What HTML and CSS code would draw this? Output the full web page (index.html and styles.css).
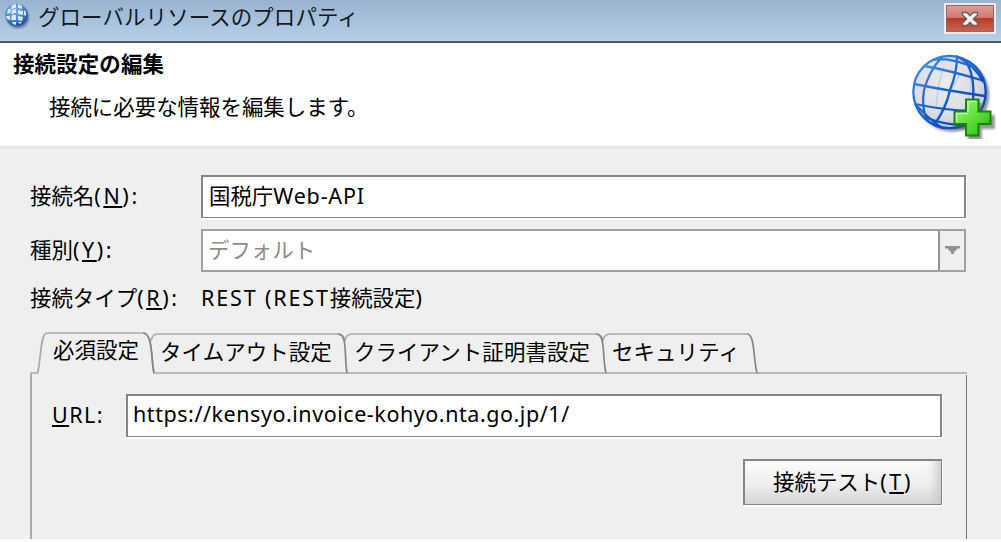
FILE: index.html
```html
<!DOCTYPE html>
<html lang="ja">
<head>
<meta charset="utf-8">
<title>グローバルリソースのプロパティ</title>
<link rel="stylesheet" href="styles.css">
</head>
<body>
<div class="dialog">
  <header class="titlebar">
    <svg class="app-icon" viewBox="0 0 26 27">
      <defs>
        <radialGradient id="ball" cx=".38" cy=".3" r=".75"><stop offset="0" stop-color="#7fb2e6"/><stop offset=".6" stop-color="#4184cf"/><stop offset="1" stop-color="#1c4890"/></radialGradient>
        <filter id="soft" x="-20%" y="-20%" width="150%" height="150%"><feGaussianBlur stdDeviation="1"/></filter>
      </defs>
      <circle cx="14" cy="15.500" r="11" fill="#39506f" opacity=".6" filter="url(#soft)"/>
      <circle cx="12.500" cy="13" r="11.300" fill="url(#ball)"/>
      <g fill="#dbe8f4">
        <path d="M8 3l4-1v4l-5 1zM14 2l4 2 0 3-4-1zM4 7l3 0-1 4-3 1zM8 8l4-1v4l-5 1zM14 8l5 1 0 4-5-1zM20 8l2 2 0 4-2-1zM2 14l4 0 0 4-3-1zM8 13l4 0v5l-5 0zM14 14l5 1-1 4-4-1zM8 20l4 0v3l-3-1zM14 20l4 0-2 2z"/>
      </g>
    </svg>
    <h1 class="title">グローバルリソースのプロパティ</h1>
    <button class="close" aria-label="閉じる">
      <svg class="close-x" viewBox="0 0 18 16"><path d="M1.500 1.500h4.500l3 3.200 3-3.200h4.500v2.500L12.300 8l4.200 4v2.500H12l-3-3.200-3 3.200H1.500V12l4.200-4-4.200-4z" fill="#f7f7f7" stroke="#685b65" stroke-width="1.300"/></svg>
    </button>
  </header>

  <section class="banner">
    <div class="banner-text">
      <h2 class="banner-title">接続設定の編集</h2>
      <p class="banner-desc">接続に必要な情報を編集します。</p>
    </div>
    <svg class="globe" viewBox="0 0 86 86">
      <defs>
        <radialGradient id="sphere" cx=".45" cy=".4" r=".6"><stop offset="0" stop-color="#ececee"/><stop offset=".7" stop-color="#dcdde1"/><stop offset="1" stop-color="#b9c9e4"/></radialGradient>
        <linearGradient id="wire" x1="0" y1="0" x2="1" y2="1"><stop offset="0" stop-color="#4695e8"/><stop offset=".55" stop-color="#1457c8"/><stop offset="1" stop-color="#0838a8"/></linearGradient>
        <linearGradient id="plus" x1="0" y1="0" x2="1" y2="1"><stop offset="0" stop-color="#a2f77b"/><stop offset=".5" stop-color="#5fe03c"/><stop offset="1" stop-color="#27b40b"/></linearGradient>
      </defs>
      <circle cx="42.500" cy="42" r="37" fill="#5d6570" opacity=".65" filter="url(#soft)"/>
      <circle cx="39.500" cy="39" r="36.800" fill="url(#sphere)"/>
      <g fill="none" stroke="#b5d0f2" stroke-width="1.400">
        <path d="M34 14Q27 32 26 56M50 20Q39 43 24 70M60 21Q63 43 52 60"/>
      </g>
      <g fill="none" stroke="url(#wire)" stroke-width="2.300">
        <circle cx="39.500" cy="39" r="36.200"/>
        <path d="M14 13Q38 17 71 27M4 31Q34 37 75 43M5 51Q33 57 62 58M17 65Q34 72 55 72"/>
        <path d="M32 4Q19 18 14 37Q11 54 17 67M47 3Q47 20 40 37Q36 56 24 72M56 9Q65 22 63 48M22 7Q36 4 58 12M6 52Q19 66 32 75M46 3Q66 13 73 29"/>
      </g>
      <path d="M58 50h14v12h13v14H72v11H58V76H46V62h12z" fill="#555" opacity=".6" filter="url(#soft)"/>
      <path d="M56 46.500h12.500v12H80.500V71H68.500v11.500H56V71H44.500V58.500H56z" fill="url(#plus)" stroke="#16850b" stroke-width="2"/>
      <path d="M58 59V48.500h8.500M46.500 69V60.500H58" fill="none" stroke="#bcff9e" stroke-width="1.300"/>
    </svg>
  </section>

  <main class="form">
    <div class="row">
      <label class="label">接続名<span class="latin key">(<u>N</u>):</span></label>
      <div class="field name">国税庁<span class="latin">Web-API</span></div>
    </div>
    <div class="row">
      <label class="label">種別<span class="latin key">(<u>Y</u>):</span></label>
      <div class="field select">
        <span class="select-value">デフォルト</span>
        <span class="select-arrow"><svg class="arrow" viewBox="0 0 15 8"><path d="M0 0h15v2.500h-2.500l-2.500 3H9V8H6V5.500H5L2.500 2.500H0z" fill="#96928b"/></svg></span>
      </div>
    </div>
    <div class="row type-row">
      <span class="label">接続タイプ<span class="latin key">(<u>R</u>):</span></span>
      <span class="type-value"><span class="latin">REST (REST</span>接続設定<span class="latin">)</span></span>
    </div>

    <nav class="tabs">
      <svg class="tab-lines" viewBox="0 0 937 46">
        <path d="M1 43V41H7.500C11 30 10 1 17 1H113C123 1 121 28 124 41H937" fill="none" stroke="#aaa" stroke-width="1.700"/>
        <g fill="none" stroke="#aaa" stroke-width="1.700">
          <path d="M121 9Q122 2 128 2H308Q314 2 315 9"/>
          <path d="M315 9Q316 2 322 2H566Q572 2 573 9"/>
          <path d="M573 9Q574 2 580 2H717"/>
        </g>
        <path d="M113 1C123 1 121 28 124 41M308 2C318 2 314 26 317 41M566 2C576 2 572 26 576 41M717 2C725 2 723 26 727 41" fill="none" stroke="#858585" stroke-width="1.700"/>
      </svg>
      <span class="tab tab-active">必須設定</span>
      <span class="tab tab-timeout">タイムアウト設定</span>
      <span class="tab tab-cert">クライアント証明書設定</span>
      <span class="tab">セキュリティ</span>
    </nav>
    <section class="panel">
      <div class="url-row">
        <label class="url-label latin"><u>U</u>RL:</label>
        <div class="field url latin">https://kensyo.invoice-kohyo.nta.go.jp/1/</div>
      </div>
      <button class="test">接続テスト<span class="latin key">(<u>T</u>)</span></button>
    </section>
  </main>
</div>
</body>
</html>
```
FILE: styles.css
```css
* { box-sizing: border-box; }
body {
  margin: 0;
  background: #fbfbfb;
  color: #000;
  font: 21.450px/30px "Noto Sans CJK JP", sans-serif;
}
h1, h2, p { margin: 0; font-size: inherit; font-weight: 400; }
button { font: inherit; color: inherit; padding: 0; }
u { text-decoration-thickness: 2px; text-underline-offset: 2px; text-decoration-skip-ink: none; }
.latin { font-family: "Noto Sans", sans-serif; font-size: 21.500px; letter-spacing: .8px; }
.key { letter-spacing: 2.600px; }

.dialog { width: 1001px; height: 542px; overflow: hidden; white-space: nowrap; }

.titlebar {
  display: flex;
  height: 43px;
  padding: 0 5px 0 4px;
  background: linear-gradient(#98b2d0, #b7cfe9);
  border-bottom: 2px solid #555;
}
.app-icon { width: 26px; height: 27px; margin-top: 2px; }
.title { margin-left: 8px; line-height: 32px; height: 32px; letter-spacing: .12px; color: #151a20; }
.close {
  width: 52px;
  height: 31px;
  margin: 3px 0 0 auto;
  display: grid;
  place-items: center;
  border: 2px solid #f3e9e9;
  outline: 1px solid #8a6a70;
  outline-offset: -3px;
  background: linear-gradient(#dda094 0%, #cf7c6e 46%, #b83c28 50%, #c96552 100%);
}
.close-x { width: 18px; height: 16px; }

.banner {
  display: flex;
  justify-content: space-between;
  height: 106px;
  padding: 5px 5px 0 13px;
  background: #fff;
  border-bottom: 3px solid #e5e5e5;
}
.banner-title { font-weight: 700; letter-spacing: .15px; }
.banner-desc { padding: 13px 0 0 36px; }
.globe { width: 86px; height: 86px; margin-top: 5px; }

.form {
  height: 390px;
  padding: 25px 34px 0 30px;
  background: #efefef;
}
.row { display: flex; align-items: center; height: 44px; margin-bottom: 10px; padding-right: 1px; }
.label { width: 171px; flex: none; margin-top: -2px; }
.field { flex: 1; height: 43px; background: #fff; border: 2px solid #858585; border-bottom: 1px solid #888; box-shadow: 1px 2px 0 #fff; }
.name { padding: 3px 6px; }
.select { display: flex; border: 2px solid #a5a09c; color: #918b87; box-shadow: none; }
.select-value { flex: 1; padding: 3px 5px; }
.select-arrow { width: 26px; display: grid; place-items: center; background: #efefef; border-left: 2px solid #96928c; }
.arrow { width: 15px; height: 8px; }
.type-row { height: 32px; margin-bottom: 18px; }
.type-value { margin-top: -2px; }
.type-value .latin { letter-spacing: 1.850px; }

.tabs { position: relative; display: flex; height: 43px; padding-left: 23px; letter-spacing: .1px; }
.tab-lines { position: absolute; left: 0; top: 0; width: 937px; height: 46px; }
.tab { position: relative; padding-top: 4px; }
.tab-active { padding-top: 2px; width: 107px; }
.tab-timeout { width: 194px; }
.tab-cert { width: 258px; }

.panel {
  height: 164px;
  padding: 19px 24px 0 20px;
  border: solid #aaa;
  border-width: 0 1px 0 2px;
  border-right-color: #777;
}
.url-row { display: flex; align-items: center; }
.url-label { width: 74px; margin-top: -2px; letter-spacing: 1.500px; }
.url { padding: 3px 6px 0 5px; letter-spacing: .55px; }
.test {
  display: block;
  width: 199px;
  height: 46px;
  margin: 22px 0 0 auto;
  padding-bottom: 3px;
  border: 2px solid #858585;
  border-width: 2px 1px 1px 2px;
  box-shadow: 1px 2px 0 #fff, inset -14px 0 12px -10px #c5c5c5;
  background: linear-gradient(#fbfbfb, #eee 55%, #d5d5d5);
}
```
